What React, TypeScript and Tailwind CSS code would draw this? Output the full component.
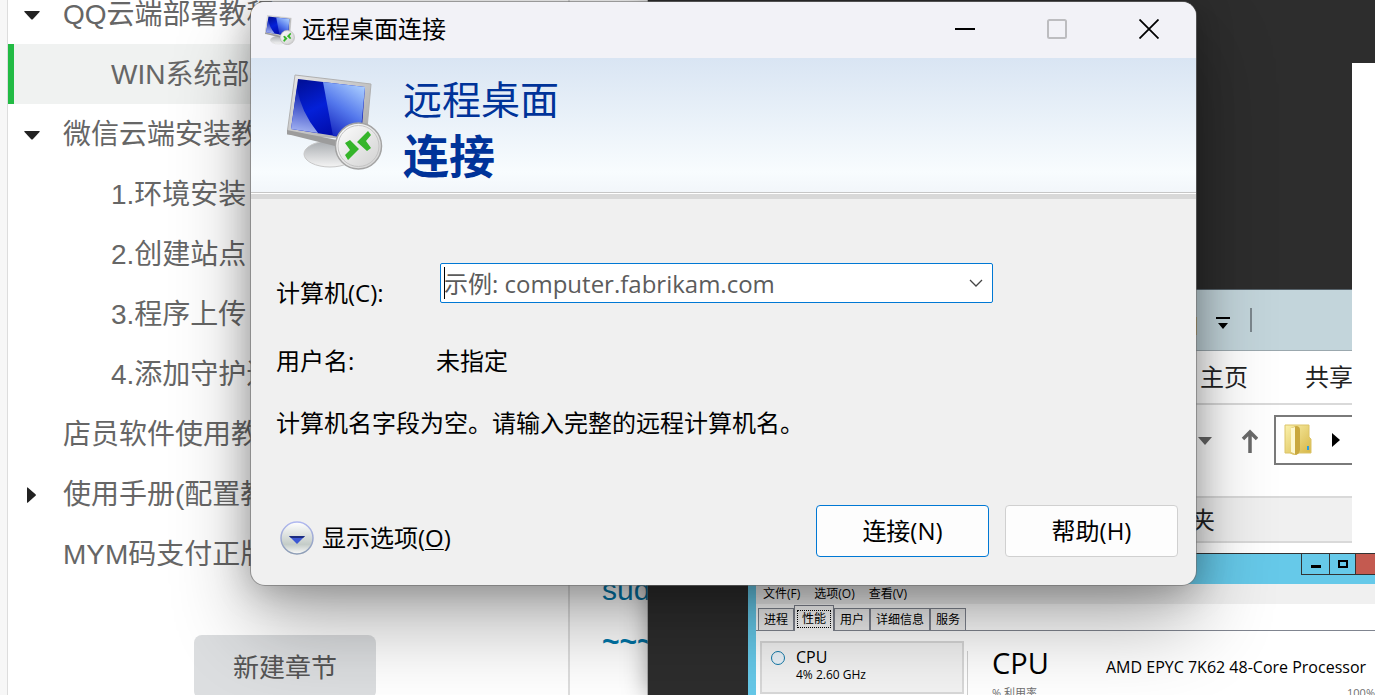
import type { ReactNode } from 'react';

interface Chapter {
  title: string;
  nested?: boolean;
  active?: boolean;
  arrow?: 'down' | 'right';
}

const chapters: Chapter[] = [
  { title: 'QQ云端部署教程', arrow: 'down' },
  { title: 'WIN系统部署', nested: true, active: true },
  { title: '微信云端安装教程', arrow: 'down' },
  { title: '1.环境安装', nested: true },
  { title: '2.创建站点', nested: true },
  { title: '3.程序上传', nested: true },
  { title: '4.添加守护进程', nested: true },
  { title: '店员软件使用教程' },
  { title: '使用手册(配置教程)', arrow: 'right' },
  { title: 'MYM码支付正版' },
];

const managerTabs = ['进程', '性能', '用户', '详细信息', '服务'];

function ChapterArrow({ direction }: { direction: 'down' | 'right' }) {
  return (
    <svg viewBox="0 0 16 16" className="h-4 w-4" fill="#222">
      {direction === 'down' ? (
        <path d="M0.8 4h14.4q1 0 .3 1L8.8 12.2q-.8.8-1.600 0L.5 5q-.7-1 .3-1z" />
      ) : (
        <path d="M3 .8q0-1 1 0l7.5 6.4q.9.8 0 1.600L4 15.500q-1 .7-1-.3z" />
      )}
    </svg>
  );
}

function Sidebar() {
  return (
    <aside className="flex h-full w-[563px] shrink-0 flex-col border-r-2 border-l border-r-[#dedede] border-l-[#dddddd] bg-white">
      <nav className="-mt-4">
        {chapters.map((c) => (
          <a
            key={c.title}
            href="#"
            className={`flex h-[60px] items-center border-l-6 pt-0.5 text-[28px] whitespace-nowrap text-[#666] ${
              c.active ? 'border-[#22bb44] bg-[#f0f2f1]' : 'border-transparent'
            }`}
          >
            <span className={`flex shrink-0 pl-2.5 ${c.nested ? 'w-[97px]' : 'w-[49px]'}`}>
              {c.arrow && <ChapterArrow direction={c.arrow} />}
            </span>
            {c.title}
          </a>
        ))}
      </nav>
      <button className="mt-[51px] ml-[186px] h-16 w-[182px] shrink-0 rounded-lg bg-[#dcdee0] pt-0.5 text-[26px] text-[#555]">
        新建章节
      </button>
    </aside>
  );
}

// Monitor with the round connection badge
function RemoteIcon({ className }: { className: string }) {
  return (
    <svg viewBox="0 0 96 96" className={className}>
      <defs>
        <linearGradient id="screen" x1="0" y1="0" x2="0.6" y2="1">
          <stop offset="0" stopColor="#000c8c" />
          <stop offset="0.5" stopColor="#0420d8" />
          <stop offset="1" stopColor="#0008a0" />
        </linearGradient>
        <linearGradient id="glare" x1="0.8" y1="0" x2="0.3" y2="1">
          <stop offset="0" stopColor="#a9cdff" />
          <stop offset="0.5" stopColor="#5478ec" />
          <stop offset="1" stopColor="#1020bc" />
        </linearGradient>
        <linearGradient id="sheen" x1="0.3" y1="0" x2="0.2" y2="1">
          <stop offset="0" stopColor="#0014b0" />
          <stop offset="1" stopColor="#a8b8f4" />
        </linearGradient>
        <linearGradient id="bezel" x1="0" y1="0" x2="1" y2="1">
          <stop offset="0" stopColor="#e8e8e8" />
          <stop offset="1" stopColor="#a6a6a6" />
        </linearGradient>
        <linearGradient id="foot" x1="0" y1="0" x2="0" y2="1">
          <stop offset="0" stopColor="#a8acb0" />
          <stop offset="1" stopColor="#f4f4f4" />
        </linearGradient>
        <linearGradient id="badge" x1="0" y1="0" x2="1" y2="1">
          <stop offset="0" stopColor="#ffffff" />
          <stop offset="1" stopColor="#cfcfcf" />
        </linearGradient>
      </defs>
      <ellipse cx="43" cy="80" rx="26" ry="13" fill="url(#foot)" stroke="#c8c8c8" />
      <path d="M8 1L84 10L79 66L0 60z" fill="url(#bezel)" stroke="#b0b0b0" />
      <path d="M0 56L50 66L48 72L0 60z" fill="#9c9c9c" />
      <path d="M11 5L78 13L74 66L4 55z" fill="url(#screen)" />
      <path d="M36 8L78 13L73 66L46 62z" fill="url(#glare)" />
      <path d="M10 14Q14 38 31 59L4 55z" fill="url(#sheen)" />
      <circle cx="71.500" cy="72" r="23" fill="url(#badge)" stroke="#a4a4a4" strokeWidth="1.500" />
      <circle cx="71.500" cy="72" r="20.500" fill="none" stroke="#c4c4c4" />
      <path d="M58 69L63 66L72 75L61 86L58 81L63 76z" fill="#35b52a" />
      <path d="M81 57L84 61L79 67L84 74L80 77L70 68z" fill="#35b52a" />
    </svg>
  );
}

function Explorer() {
  return (
    <section className="absolute top-[289px] right-[23px] left-[400px] flex h-[270px] flex-col border-t border-[#56626a] bg-white text-2xl text-[#222]">
      <div className="flex h-[61px] items-center border-b border-[#9ba8ae] bg-[#c3d5db] pl-[139px]">
        <span className="mt-3 h-[18px] w-2.5 bg-[#c8a24a]" />
        <svg viewBox="0 0 14 14" className="mt-1.5 ml-[19px] h-3.5 w-3.5">
          <path d="M0 1h14v2H0zM2 7h10l-5 6z" fill="#000" />
        </svg>
        <span className="ml-5 h-6 w-0.5 bg-[#7b878d]" />
      </div>
      <div className="flex h-[54px] items-center gap-[57px] overflow-hidden border-b-2 border-[#d9d9d9] pl-[152px] whitespace-nowrap">
        <span>主页</span>
        <span>共享</span>
      </div>
      <div className="flex h-[93px] items-start overflow-hidden border-b-2 border-[#d9d9d9] pt-2.5 pl-[150px]">
        <svg viewBox="0 0 60 50" className="h-[50px] w-[60px] shrink-0">
          <path d="M0 22h14l-7 8z" fill="#666" />
          <path d="M52 38V18M45 24l7-7 7 7" fill="none" stroke="#6a6a6a" strokeWidth="3.500" />
        </svg>
        <div className="ml-4 flex h-[50px] flex-1 items-center border-2 border-r-0 border-[#7a7a7a] pl-2">
          <svg viewBox="0 0 28 32" className="h-8 w-7">
            <defs>
              <linearGradient id="folder" x1="0" y1="0" x2="1" y2="1">
                <stop offset="0" stopColor="#fbf2ae" />
                <stop offset="1" stopColor="#d6b544" />
              </linearGradient>
            </defs>
            <path d="M1 1h24v12l2 2v14H15q-5 3-9 0H1z" fill="url(#folder)" stroke="#dcc468" />
            <path d="M7 4l5-2q4 0 4 4v20q-1 4-4 5l-5-3z" fill="#c9a83e" />
            <path d="M7 4l4-1v27l-4-2z" fill="#fdf8d0" />
            <path d="M23 22h2v4h-2z" fill="#2b9de0" />
          </svg>
          <svg viewBox="0 0 8 14" className="ml-5 h-3.5 w-2">
            <path d="M0 0l8 7-8 7z" fill="#000" />
          </svg>
        </div>
      </div>
      <div className="flex h-[45px] items-center border-b-2 border-[#d9d9d9] bg-[#f0f0f0] pl-[143px]">夹</div>
    </section>
  );
}

function TaskManager() {
  return (
    <section className="absolute top-[553px] right-0 bottom-0 left-[100px] overflow-hidden border-t border-l-8 border-t-[#333] border-l-[#66c9e9] bg-white text-black">
      <div className="flex h-[30px] items-start justify-end bg-[#66c9e9]">
        <div className="flex h-[21px] divide-x divide-[#333] border-b border-l border-[#333]">
          <button aria-label="最小化" className="flex w-7 items-center justify-center">
            <span className="mt-1 h-[3px] w-2.5 bg-black" />
          </button>
          <button aria-label="最大化" className="flex w-[26px] items-center justify-center">
            <span className="h-2 w-2.5 border-2 border-black" />
          </button>
          <button aria-label="关闭" className="w-[19px] bg-[#c45a50]" />
        </div>
      </div>
      <div className="flex h-5 items-center gap-3.5 bg-[#f0f0f0] pl-[7px] text-xs leading-none">
        <button>文件(F)</button>
        <button>选项(O)</button>
        <button>查看(V)</button>
      </div>
      <div className="flex h-[27px] items-end border-b border-[#808590] pl-0.5 text-xs">
        {managerTabs.map((tab) => (
          <button
            key={tab}
            className={
              tab === '性能'
                ? '-mb-px h-[26px] border border-b-0 border-[#808590] bg-white p-0.5'
                : 'h-[22px] border border-b-0 border-[#808590] bg-[#f0f0f0] px-[5px]'
            }
          >
            {tab === '性能' ? <span className="block border border-dotted border-black px-1">{tab}</span> : tab}
          </button>
        ))}
      </div>
      <div className="flex pt-2.5 pl-1 whitespace-nowrap">
        <div className="flex h-[53px] w-[204px] shrink-0 border-2 border-[#d8d8d8] bg-[#f2f2f2] pt-1 pl-[9px]">
          <span className="mt-1 h-3.5 w-3.5 rounded-full border border-[#1178a8] bg-[#e9f2f8]" />
          <div className="ml-[11px]">
            <div className="text-base leading-5">CPU</div>
            <div className="text-xs leading-4">4% 2.60 GHz</div>
          </div>
        </div>
        <div className="mt-2.5 ml-[3px] flex-1 border-l border-[#d0d0d0] pl-6">
          <div className="flex h-9 items-start">
            <span className="w-[114px] text-[29px] leading-6">CPU</span>
            <span className="text-base leading-8">AMD EPYC 7K62 48-Core Processor</span>
          </div>
          <div className="flex justify-between text-[11px] leading-3 text-[#707070]">
            <span>% 利用率</span>
            <span>100%</span>
          </div>
        </div>
      </div>
    </section>
  );
}

function RemoteDesktop({ children }: { children: ReactNode }) {
  return (
    <div className="absolute inset-y-0 right-0 left-[648px] bg-[#2d2d2d] font-['Open_Sans','Noto_Sans_CJK_SC',sans-serif] shadow-[0_0_0_1px_rgba(120,120,120,0.5),0_0_24px_rgba(0,0,0,0.4)]">
      <div className="absolute top-[63px] right-0 bottom-0 w-[23px] bg-white" />
      {children}
    </div>
  );
}

function ConnectionDialog() {
  return (
    <section
      role="dialog"
      aria-label="远程桌面连接"
      className="absolute top-0.5 left-[251px] w-[945px] overflow-hidden rounded-[14px] bg-[#f0f0f0] font-['Open_Sans','Noto_Sans_CJK_SC',sans-serif] text-2xl text-black shadow-[0_0_0_1px_rgba(110,110,110,0.6),0_40px_80px_rgba(0,0,0,0.3),0_4px_36px_rgba(0,0,0,0.28)]"
    >
      <header className="flex h-14 items-center bg-[#f2f2f7] pr-px pl-3.5">
        <RemoteIcon className="h-[30px] w-[30px]" />
        <h1 className="ml-[7px] flex-1 pb-0.5">远程桌面连接</h1>
        <button aria-label="最小化" className="flex w-[92px] justify-center pb-0.5">
          <svg viewBox="0 0 20 20" className="h-5 w-5">
            <path d="M0 10h20" stroke="#000" strokeWidth="2" />
          </svg>
        </button>
        <button aria-label="最大化" disabled className="flex w-[92px] justify-center pb-0.5">
          <svg viewBox="0 0 20 20" className="h-5 w-5">
            <rect x="1" y="1" width="18" height="18" rx="1.500" fill="none" stroke="#bdbdc0" strokeWidth="2" />
          </svg>
        </button>
        <button aria-label="关闭" className="flex w-[92px] justify-center pb-0.5">
          <svg viewBox="0 0 20 20" className="h-5 w-5">
            <path d="M.5.500l19 19M19.500.500l-19 19" stroke="#000" strokeWidth="1.800" />
          </svg>
        </button>
      </header>

      <div className="flex h-[135px] items-start border-b border-[#c6c6c6] bg-linear-to-b from-[#d9e5f3] via-[#f8fcfe] via-85% to-[#f2f6fa] pl-9 text-[#003399]">
        <RemoteIcon className="mt-4 h-24 w-24" />
        <div className="mt-[13px] ml-5">
          <div className="text-[39px] leading-[56px]">远程桌面</div>
          <div className="text-[46px] leading-[56px] font-bold">连接</div>
        </div>
      </div>
      <div className="h-1.5 border-t border-white bg-[#d8d8d8]" />

      <form className="px-[25px] pt-16 pb-7" onSubmit={(e) => e.preventDefault()}>
        <div className="flex items-start">
          <label htmlFor="computer" className="w-[164px] pt-3 leading-9">
            计算机(C):
          </label>
          <div className="flex h-10 w-[553px] items-center rounded-xs border border-[#0078d4] bg-white pr-[9px] pl-[3px]">
            <span className="h-8 w-px bg-black" />
            <input
              id="computer"
              placeholder="示例: computer.fabrikam.com"
              className="-ml-px min-w-0 flex-1 pt-0.5 outline-none placeholder:text-[#5c5c5c]"
            />
            <button type="button" aria-label="最近的计算机">
              <svg viewBox="0 0 14 14" className="h-3.5 w-3.5">
                <path d="M1 4l6 6 6-6" fill="none" stroke="#444" strokeWidth="1.300" />
              </svg>
            </button>
          </div>
        </div>
        <div className="mt-8 flex leading-9">
          <span className="w-[160px]">用户名:</span>
          <span>未指定</span>
        </div>
        <p className="mt-[26px] leading-9">计算机名字段为空。请输入完整的远程计算机名。</p>
        <div className="mt-16 flex items-center">
          <button type="button" className="mt-3.5 ml-[3px] flex items-center gap-[7px]">
            <svg viewBox="0 0 36 36" className="h-9 w-9">
              <defs>
                <linearGradient id="round" x1="0" y1="0" x2="0" y2="1">
                  <stop offset="0" stopColor="#fff" />
                  <stop offset="0.7" stopColor="#c4ccc8" />
                  <stop offset="1" stopColor="#fafafa" />
                </linearGradient>
                <linearGradient id="ring" x1="0" y1="0" x2="0" y2="1">
                  <stop offset="0" stopColor="#b0b8f0" />
                  <stop offset="1" stopColor="#8c9cb4" />
                </linearGradient>
              </defs>
              <circle cx="18" cy="18" r="16" fill="url(#round)" stroke="url(#ring)" strokeWidth="1.500" />
              <path d="M10 16h16l-8 8z" fill="#3c58d4" />
              <path d="M10 16h16l-2 2H12z" fill="#1c2c80" />
            </svg>
            <span>
              显示选项(<u className="decoration-1 underline-offset-2">O</u>)
            </span>
          </button>
          <div className="-mr-[7px] ml-auto flex gap-4">
            <button className="h-[52px] w-[173px] rounded-sm border border-[#0078d4] bg-[#fdfdfd]">连接(N)</button>
            <button type="button" className="h-[52px] w-[173px] rounded-sm border border-[#d0d0d0] bg-[#fdfdfd]">
              帮助(H)
            </button>
          </div>
        </div>
      </form>
    </section>
  );
}

export default function App() {
  return (
    <main className="relative h-screen overflow-hidden bg-[#f7f7f7] font-['Liberation_Sans','Noto_Sans_CJK_SC',sans-serif]">
      <div className="flex h-full pl-[7px]">
        <Sidebar />
        <article className="flex flex-1 flex-col justify-end bg-white pb-[27px] pl-8 text-[30px] leading-[52px] text-[#0077aa]">
          <p>sudo</p>
          <p className="font-bold">~~~</p>
        </article>
      </div>
      <RemoteDesktop>
        <Explorer />
        <TaskManager />
      </RemoteDesktop>
      <ConnectionDialog />
    </main>
  );
}
